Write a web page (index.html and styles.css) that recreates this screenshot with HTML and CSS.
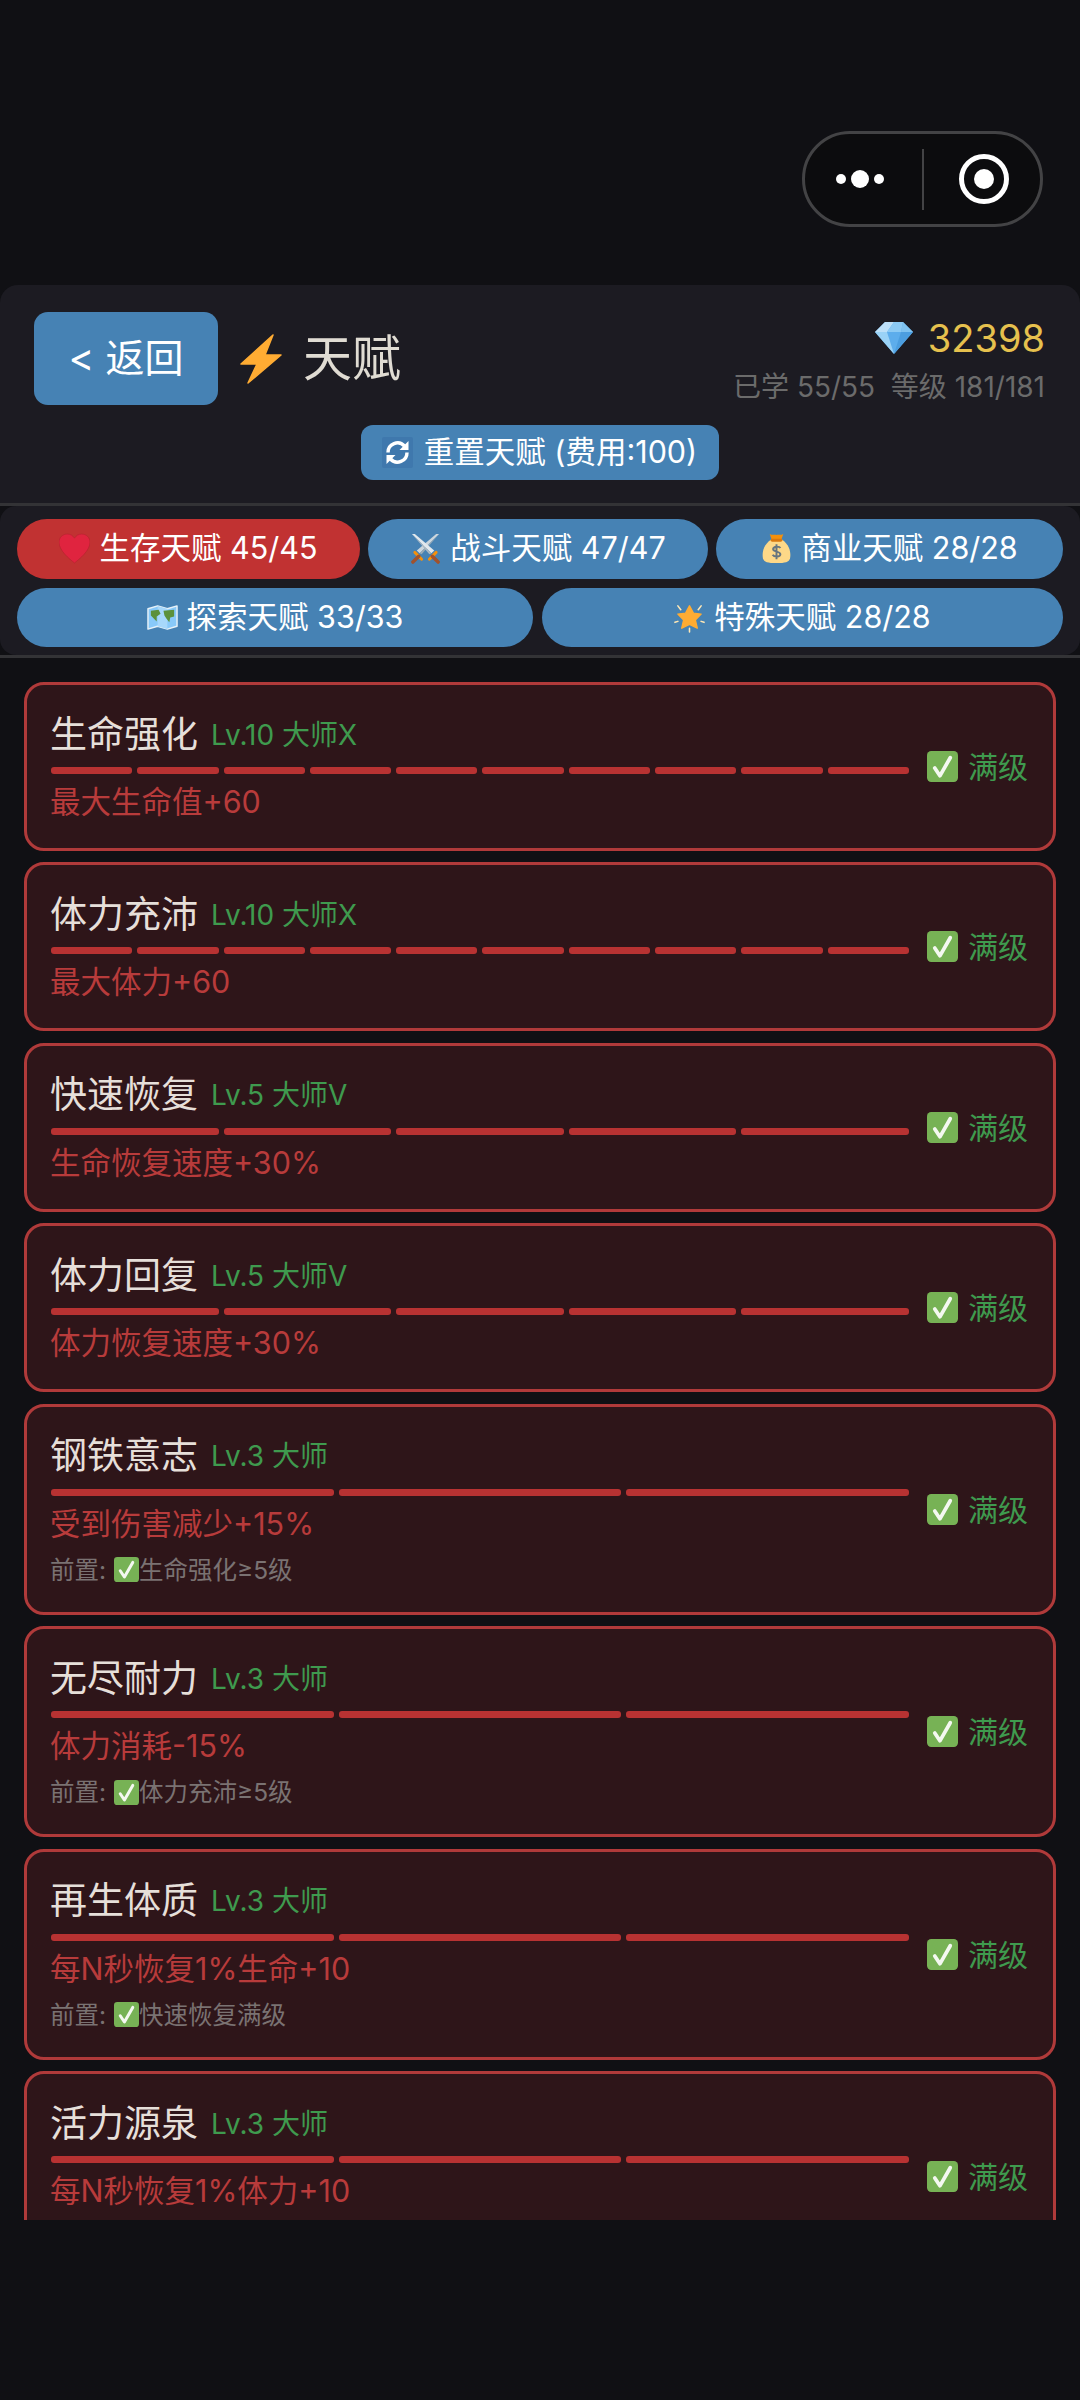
FILE: index.html
```html
<!DOCTYPE html>
<html lang="zh-CN">
<head>
    <meta charset="UTF-8">
    <meta name="viewport" content="width=device-width, initial-scale=1.0">
    <title>天赋</title>
    <link rel="stylesheet" href="styles.css">
</head>
<body>
    <!-- shared icons -->
    <svg class="icon-defs" aria-hidden="true">
        <symbol id="check" viewBox="0 0 30 30">
            <rect x="0" y="0" width="30" height="30" rx="4" fill="#77b255"/>
            <path d="M7.5 16.5 L12.5 24 L22.5 6.5" fill="none" stroke="#f4f8f0" stroke-width="3.6" stroke-linecap="round" stroke-linejoin="round"/>
        </symbol>
    </svg>

    <div class="top-bar">
        <div class="capsule">
            <div class="capsule-dots"><i></i><i class="big"></i><i></i></div>
            <div class="capsule-line"></div>
            <div class="capsule-target"><i></i></div>
        </div>
    </div>

    <header class="page-head">
        <div class="head-row">
            <div class="head-left">
                <button class="back-btn">&lt; 返回</button>
                <svg class="bolt" viewBox="0 0 42 50"><path d="M33 1 L1 30 L17 30 L8 49 L41 21 L25 21 Z" fill="#ffac33" stroke="#ffac33" stroke-width="1.5" stroke-linejoin="round"/></svg>
                <h1 class="head-title">天赋</h1>
            </div>
            <div class="head-right">
                <div class="gold">
                    <svg class="gem" viewBox="0 0 38 32">
                        <path d="M10 0 H28 L38 10 L19 32 L0 10 Z" fill="#5dadec"/>
                        <path d="M10 0 H19 L12 10 H0 Z" fill="#bde0f8"/>
                        <path d="M19 0 H28 L26 10 H12 Z" fill="#8ccaf4"/>
                        <path d="M28 0 L38 10 H26 Z" fill="#7fc2f0"/>
                        <path d="M0 10 H12 L19 32 Z" fill="#9ad2f6"/>
                        <path d="M26 10 H38 L19 32 Z" fill="#4c9ee0"/>
                    </svg>
                    <span>32398</span>
                </div>
                <div class="head-stats">已学 55/55&nbsp; 等级 181/181</div>
            </div>
        </div>
        <div class="reset-wrap">
            <button class="reset-btn">
                <svg class="reset-icon" viewBox="0 0 31 31">
                    <rect width="31" height="31" rx="2" fill="#3f78ad"/>
                    <path d="M6 15.500 A9.500 9.500 0 0 1 22.500 9" fill="none" stroke="#fff" stroke-width="3.4"/>
                    <path d="M25 15.500 A9.500 9.500 0 0 1 8.500 22" fill="none" stroke="#fff" stroke-width="3.4"/>
                    <path d="M26.500 4 V13 H17.500 Z" fill="#fff"/>
                    <path d="M4.500 27 V18 H13.500 Z" fill="#fff"/>
                </svg>
                <span>重置天赋 (费用:100)</span>
            </button>
        </div>
    </header>

    <nav class="tabs-wrap">
        <div class="tabs">
            <div class="tab-row tab-row-three">
                <div class="tab tab-active">
                    <svg class="tab-icon" viewBox="0 0 30 30"><path d="M15 29 C10 25 0 17 0 9 C0 4 4 1 8 1 C11 1 13.500 2.500 15 5 C16.500 2.500 19 1 22 1 C26 1 30 4 30 9 C30 17 20 25 15 29 Z" fill="#e0243f" stroke="#b5222f" stroke-width=".6"/></svg>
                    <span>生存天赋 45/45</span>
                </div>
                <div class="tab">
                    <svg class="tab-icon" viewBox="0 0 32 32">
                        <path d="M30 1 L10 21 L7 18 L27 1 Z" fill="#ccd6dd"/>
                        <path d="M30 1 L12 22 L10 21 Z" fill="#99aab5"/>
                        <path d="M2 1 L22 21 L25 18 L5 1 Z" fill="#e1e8ed"/>
                        <path d="M2 1 L20 22 L22 21 Z" fill="#aab8c2"/>
                        <path d="M5 20 L12 27" stroke="#f4900c" stroke-width="3" stroke-linecap="round"/>
                        <path d="M27 20 L20 27" stroke="#f4900c" stroke-width="3" stroke-linecap="round"/>
                        <path d="M9 24 L3 30" stroke="#a0522d" stroke-width="3.6" stroke-linecap="round"/>
                        <path d="M23 24 L29 30" stroke="#a0522d" stroke-width="3.6" stroke-linecap="round"/>
                    </svg>
                    <span>战斗天赋 47/47</span>
                </div>
                <div class="tab">
                    <svg class="tab-icon" viewBox="0 0 30 32">
                        <path d="M9 7 C1 13 0 21 1 26 C2 30 6 31 15 31 C24 31 28 30 29 26 C30 21 29 13 21 7 Z" fill="#fdd888"/>
                        <path d="M8 1 C11 3 13 1 15 2 C17 1 19 3 22 1 L20 7 H10 Z" fill="#f4900c"/>
                        <rect x="9" y="6" width="12" height="3" rx="1.500" fill="#d9780f"/>
                        <path d="M19 15.500 C18 13.500 12 13.500 11.500 16.500 C11 20 19 18.500 19 22 C19 25 12.500 25 11 22.500 M15 11.500 V27" fill="none" stroke="#67757f" stroke-width="2"/>
                    </svg>
                    <span>商业天赋 28/28</span>
                </div>
            </div>
            <div class="tab-row tab-row-two">
                <div class="tab">
                    <svg class="tab-icon" viewBox="0 0 32 26">
                        <path d="M1 4 L11 1 L21 4 L31 1 V22 L21 25 L11 22 L1 25 Z" fill="#88c9f9" stroke="#e6f1f8" stroke-width="1.500" stroke-linejoin="round"/>
                        <path d="M11 1 V22 L21 25 V4 Z" fill="#a7d8fb"/>
                        <path d="M4 6 L12 5 L14 9 L10 12 L10 17 L7 14 L4 11 Z" fill="#5c913b"/>
                        <path d="M17 6 L28 5 L28 12 L24 13 L23 18 L20 14 L18 11 Z" fill="#5c913b"/>
                    </svg>
                    <span>探索天赋 33/33</span>
                </div>
                <div class="tab">
                    <svg class="tab-icon" viewBox="0 0 32 32">
                        <path d="M16 4 L20 11.500 L28 12.500 L22 18.500 L24 27 L16 23 L8 27 L10 18.500 L4 12.500 L12 11.500 Z" fill="#ffac33" stroke="#ffac33" stroke-width="1.500" stroke-linejoin="round"/>
                        <path d="M16 27 V31 M4 4 L7 8 M28 4 L25 8 M1 21 L4 20 M31 21 L28 20" stroke="#ffe8b6" stroke-width="1.600" stroke-linecap="round"/>
                    </svg>
                    <span>特殊天赋 28/28</span>
                </div>
            </div>
        </div>
    </nav>

    <main class="talent-list">
        <div class="card">
            <div class="card-main">
                <div class="card-title"><span class="name">生命强化</span><span class="lv">Lv.10 大师X</span></div>
                <div class="bar"><i></i><i></i><i></i><i></i><i></i><i></i><i></i><i></i><i></i><i></i></div>
                <div class="effect">最大生命值+60</div>
            </div>
            <div class="status"><svg class="check"><use href="#check"/></svg><span>满级</span></div>
        </div>
        <div class="card">
            <div class="card-main">
                <div class="card-title"><span class="name">体力充沛</span><span class="lv">Lv.10 大师X</span></div>
                <div class="bar"><i></i><i></i><i></i><i></i><i></i><i></i><i></i><i></i><i></i><i></i></div>
                <div class="effect">最大体力+60</div>
            </div>
            <div class="status"><svg class="check"><use href="#check"/></svg><span>满级</span></div>
        </div>
        <div class="card">
            <div class="card-main">
                <div class="card-title"><span class="name">快速恢复</span><span class="lv">Lv.5 大师V</span></div>
                <div class="bar"><i></i><i></i><i></i><i></i><i></i></div>
                <div class="effect">生命恢复速度+30%</div>
            </div>
            <div class="status"><svg class="check"><use href="#check"/></svg><span>满级</span></div>
        </div>
        <div class="card">
            <div class="card-main">
                <div class="card-title"><span class="name">体力回复</span><span class="lv">Lv.5 大师V</span></div>
                <div class="bar"><i></i><i></i><i></i><i></i><i></i></div>
                <div class="effect">体力恢复速度+30%</div>
            </div>
            <div class="status"><svg class="check"><use href="#check"/></svg><span>满级</span></div>
        </div>
        <div class="card">
            <div class="card-main">
                <div class="card-title"><span class="name">钢铁意志</span><span class="lv">Lv.3 大师</span></div>
                <div class="bar"><i></i><i></i><i></i></div>
                <div class="effect">受到伤害减少+15%</div>
                <div class="prereq">前置: <svg class="check-small"><use href="#check"/></svg>生命强化≥5级</div>
            </div>
            <div class="status"><svg class="check"><use href="#check"/></svg><span>满级</span></div>
        </div>
        <div class="card">
            <div class="card-main">
                <div class="card-title"><span class="name">无尽耐力</span><span class="lv">Lv.3 大师</span></div>
                <div class="bar"><i></i><i></i><i></i></div>
                <div class="effect">体力消耗-15%</div>
                <div class="prereq">前置: <svg class="check-small"><use href="#check"/></svg>体力充沛≥5级</div>
            </div>
            <div class="status"><svg class="check"><use href="#check"/></svg><span>满级</span></div>
        </div>
        <div class="card">
            <div class="card-main">
                <div class="card-title"><span class="name">再生体质</span><span class="lv">Lv.3 大师</span></div>
                <div class="bar"><i></i><i></i><i></i></div>
                <div class="effect">每N秒恢复1%生命+10</div>
                <div class="prereq">前置: <svg class="check-small"><use href="#check"/></svg>快速恢复满级</div>
            </div>
            <div class="status"><svg class="check"><use href="#check"/></svg><span>满级</span></div>
        </div>
        <div class="card">
            <div class="card-main">
                <div class="card-title"><span class="name">活力源泉</span><span class="lv">Lv.3 大师</span></div>
                <div class="bar"><i></i><i></i><i></i></div>
                <div class="effect">每N秒恢复1%体力+10</div>
                <div class="prereq">前置: <svg class="check-small"><use href="#check"/></svg>体力回复满级</div>
            </div>
            <div class="status"><svg class="check"><use href="#check"/></svg><span>满级</span></div>
        </div>
    </main>
</body>
</html>
```

FILE: styles.css
```css
* {
    box-sizing: border-box;
}
body {
    margin: 0;
    width: 1080px;
    height: 2400px;
    overflow: hidden;
    background-color: #101014;
    font-family: "Inter", "Noto Sans CJK SC", sans-serif;
}
button {
    font-family: inherit;
    border: none;
    color: #fff;
    background-color: #4682b4;
    padding: 0;
}
.icon-defs {
    display: none;
}

/* top bar with the mini program capsule */
.top-bar {
    height: 285px;
    padding: 131px 37px 0 0;
    display: flex;
    justify-content: flex-end;
    align-items: flex-start;
}
.capsule {
    width: 241px;
    height: 96px;
    display: flex;
    align-items: center;
    background-color: #0c0c0e;
    border: 3px solid #434345;
    border-radius: 48px;
}
.capsule-dots {
    width: 117px;
    display: flex;
    justify-content: flex-end;
    align-items: center;
    gap: 5px;
    padding-right: 38px;
}
.capsule-dots i {
    width: 10px;
    height: 10px;
    border-radius: 50%;
    background-color: #fff;
}
.capsule-dots i.big {
    width: 18px;
    height: 18px;
}
.capsule-line {
    width: 2px;
    height: 61px;
    background-color: #434345;
}
.capsule-target {
    margin-left: 35px;
    width: 50px;
    height: 50px;
    display: flex;
    align-items: center;
    justify-content: center;
    border: 5px solid #fff;
    border-radius: 50%;
}
.capsule-target i {
    width: 20px;
    height: 20px;
    background-color: #fff;
    border-radius: 50%;
}

/* page header */
.page-head {
    height: 218px;
    padding: 27px 35px 0 34px;
    background-color: #1c1b22;
    border-radius: 18px 18px 0 0;
}
.head-row {
    display: flex;
    justify-content: space-between;
    align-items: flex-start;
    height: 93px;
}
.head-left {
    display: flex;
    align-items: center;
    height: 93px;
}
.back-btn {
    width: 184px;
    height: 93px;
    padding-bottom: 7px;
    font-size: 39px;
    border-radius: 14px;
}
.bolt {
    width: 42px;
    height: 50px;
    margin-left: 22px;
}
.head-title {
    margin: 0 0 0 21px;
    padding-bottom: 9px;
    font-size: 49px;
    font-weight: 400;
    color: #e0dcd3;
}
.head-right {
    display: flex;
    flex-direction: column;
    align-items: flex-end;
}
.gold {
    display: flex;
    align-items: center;
    gap: 15px;
    height: 44px;
    margin-top: 4px;
    font-size: 38px;
    color: #e6c14e;
}
.gem {
    width: 38px;
    height: 32px;
}
.head-stats {
    margin-top: 8px;
    font-size: 28px;
    line-height: 38px;
    color: #6b6b6b;
}
.reset-wrap {
    display: flex;
    justify-content: center;
    margin-top: 20px;
}
.reset-btn {
    width: 358px;
    height: 55px;
    display: flex;
    align-items: center;
    justify-content: center;
    gap: 11px;
    font-size: 30.5px;
    border-radius: 12px;
}
.reset-btn span {
    padding-bottom: 5px;
}
.reset-icon {
    width: 31px;
    height: 31px;
}

/* category tabs */
.tabs-wrap {
    border-top: 3px solid #333336;
    border-bottom: 3px solid #333336;
}
.tabs {
    height: 149px;
    padding: 13px 17px 0;
    display: flex;
    flex-direction: column;
    gap: 9px;
    background-color: #1c1b22;
    border-radius: 16px;
}
.tab-row {
    display: grid;
    gap: 8px;
}
.tab-row-three {
    grid-template-columns: 343fr 340fr 347fr;
}
.tab-row-two {
    gap: 9px;
    grid-template-columns: 516fr 521fr;
}
.tab {
    height: 59.5px;
    display: flex;
    align-items: center;
    justify-content: center;
    gap: 9px;
    font-size: 30.5px;
    color: #fff;
    background-color: #4682b4;
    border-radius: 30px;
}
.tab span {
    padding-bottom: 5px;
}
.tab-active {
    background-color: #c13232;
}
.tab-icon {
    width: 31px;
    height: 31px;
}

/* talent cards */
.talent-list {
    height: 1562px;
    padding: 24px 24px 0;
    overflow: hidden;
    display: flex;
    flex-direction: column;
    gap: 11.7px;
}
.card {
    flex-shrink: 0;
    display: flex;
    align-items: center;
    gap: 18px;
    padding: 22px 25px 26px 24px;
    background-color: #2e1519;
    border: 3px solid #b03a3a;
    border-radius: 20px;
}
.card-main {
    flex: 1;
    min-width: 0;
}
.card-title {
    display: flex;
    align-items: center;
    gap: 13px;
    height: 52px;
    line-height: 44px;
    padding-top: 3px;
}
.name {
    margin-left: -1px;
    font-size: 37px;
    color: #e6dfd9;
}
.lv {
    font-size: 28px;
    color: #3f9a4e;
}
.bar {
    display: flex;
    gap: 5px;
    margin-top: 8px;
}
.bar i {
    flex: 1;
    height: 6.8px;
    background-color: #b83232;
    border-radius: 3px;
}
.effect {
    margin: 8px 0 0 -1px;
    font-size: 30.5px;
    line-height: 40px;
    color: #b83b3b;
}
.prereq {
    display: flex;
    align-items: center;
    margin: 10px 0 0 -1px;
    height: 32px;
    line-height: 32px;
    font-size: 24.5px;
    color: #7a7272;
    white-space: pre;
}
.check-small {
    width: 25px;
    height: 25px;
    margin-left: 1px;
}
.status {
    display: flex;
    align-items: center;
    gap: 10px;
    margin-top: 4px;
    font-size: 30px;
    color: #3f9a4e;
}
.status span {
    padding-bottom: 3px;
}
.check {
    width: 31px;
    height: 31px;
}
```
